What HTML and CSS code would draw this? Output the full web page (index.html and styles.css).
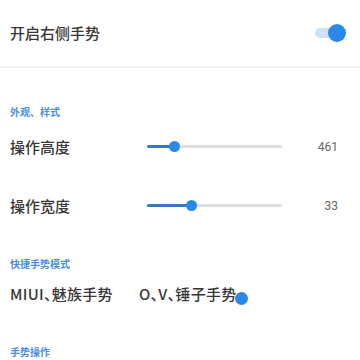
FILE: index.html
```html
<!DOCTYPE html>
<html lang="zh-CN">
<head>
<meta charset="utf-8">
<link rel="stylesheet" href="styles.css">
</head>
<body>
<div class="page">
  <div class="row main">
    <span class="label">开启右侧手势</span>
    <span class="switch"><span class="knob"></span></span>
  </div>
  <div class="divider"></div>

  <div class="header first">外观、样式</div>
  <div class="row slider-row">
    <span class="label">操作高度</span>
    <span class="slider"><span class="fill" style="width:27px"></span><span class="thumb" style="left:27px"></span></span>
    <span class="value">461</span>
  </div>
  <div class="row slider-row">
    <span class="label">操作宽度</span>
    <span class="slider"><span class="fill" style="width:44px"></span><span class="thumb" style="left:44px"></span></span>
    <span class="value">33</span>
  </div>

  <div class="header second">快捷手势模式</div>
  <div class="row modes">
    <span class="label">MIUI、魅族手势</span>
    <span class="label mode-b">O、V、锤子手势<span class="dot"></span></span>
  </div>

  <div class="header third">手势操作</div>
</div>
</body>
</html>
```
FILE: styles.css
```css
html, body {
  margin: 0;
  padding: 0;
  background: #ffffff;
}
.page {
  width: 360px;
  height: 360px;
  overflow: hidden;
  font-family: "Noto Sans CJK SC", "Noto Sans", sans-serif;
}
.row {
  display: flex;
  align-items: center;
  padding: 0 15px 0 10px;
}
.label {
  font-size: 15px;
  font-weight: 500;
  color: #383838;
  line-height: 20px;
}
.main {
  height: 66px;
  justify-content: space-between;
}
.switch {
  position: relative;
  width: 30px;
  height: 10px;
  border-radius: 5px;
  background: #cfe2f7;
}
.knob {
  position: absolute;
  right: -1px;
  top: -4px;
  width: 18px;
  height: 18px;
  border-radius: 50%;
  background: #2a88e8;
}
.divider {
  height: 2px;
  background: #f0f0f0;
}
.header {
  font-size: 10px;
  line-height: 10px;
  height: 10px;
  font-weight: 700;
  color: #4a8fdf;
  padding-left: 10px;
}
.header.first { margin-top: 39px; }
.header.second { margin-top: 24px; }
.header.third { margin-top: 28px; }
.slider-row {
  height: 59px;
}
.slider-row:first-of-type { }
.slider-row .label {
  width: 137px;
}
.slider {
  position: relative;
  width: 135px;
  height: 3px;
  background: #dedede;
  border-radius: 2px;
}
.fill {
  position: absolute;
  left: 0;
  top: 0;
  height: 3px;
  background: #3479c4;
  border-radius: 2px;
}
.thumb {
  position: absolute;
  top: -4px;
  width: 11px;
  height: 11px;
  margin-left: -5px;
  border-radius: 50%;
  background: #2a88e8;
}
.value {
  margin-left: auto;
  margin-right: 7px;
  font-family: Roboto, "Noto Sans", sans-serif;
  font-size: 12px;
  color: #666666;
}
.modes {
  height: 50px;
  font-feature-settings: "halt";
}
.modes .label {
  font-feature-settings: "halt";
  letter-spacing: 0.3px;
}
.mode-b {
  position: relative;
  margin-left: 26px;
}
.dot {
  position: absolute;
  right: -11px;
  top: 8px;
  width: 13px;
  height: 13px;
  border-radius: 50%;
  background: #2f86ea;
}
```
